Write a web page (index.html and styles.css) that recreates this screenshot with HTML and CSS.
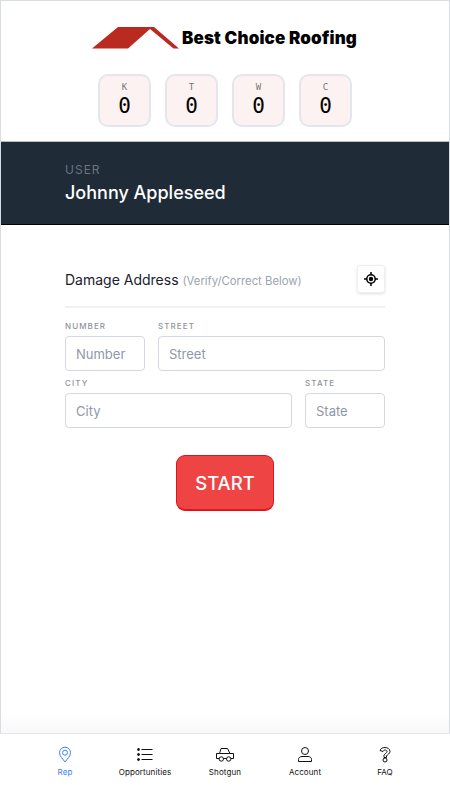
FILE: index.html
```html
<!DOCTYPE html>
<html>
<head>
  <title>Best Choice Roofing</title>
  <link rel="stylesheet" href="styles.css">
</head>
<body>
  <div class="app">
    <main class="main">
      <div class="logo">
        <svg class="logo-roof" width="87" height="22" viewBox="0 0 87 22">
          <path fill="#b92a20" d="M26 0H62L87 21.500H81.500L58 2 36 21.500H0z"/>
        </svg>
        <span class="logo-text">Best Choice Roofing</span>
      </div>
      <div class="counters">
        <div class="counter"><span class="counter-key">K</span><span class="counter-val">0</span></div>
        <div class="counter"><span class="counter-key">T</span><span class="counter-val">0</span></div>
        <div class="counter"><span class="counter-key">W</span><span class="counter-val">0</span></div>
        <div class="counter"><span class="counter-key">C</span><span class="counter-val">0</span></div>
      </div>
      <div class="user-bar">
        <div class="user-label">USER</div>
        <div class="user-name">Johnny Appleseed</div>
      </div>
      <form class="address">
        <div class="address-head">
          <div class="address-title">Damage Address <small>(Verify/Correct Below)</small></div>
          <button type="button" class="locate">
            <svg width="14" height="14" viewBox="0 0 14 14" fill="none" stroke="#000">
              <circle cx="7" cy="7" r="4.200" stroke-width="1.500"/>
              <circle cx="7" cy="7" r="2.200" fill="#000" stroke="none"/>
              <path stroke-width="1.500" d="M7 0V3M7 11V14M0 7H3M11 7H14"/>
            </svg>
          </button>
        </div>
        <div class="field-row">
          <label class="field field-small"><span>NUMBER</span><input placeholder="Number"></label>
          <label class="field field-grow"><span>STREET</span><input placeholder="Street"></label>
        </div>
        <div class="field-row">
          <label class="field field-grow"><span>CITY</span><input placeholder="City"></label>
          <label class="field field-small"><span>STATE</span><input placeholder="State"></label>
        </div>
        <button type="button" class="start">START</button>
      </form>
    </main>
    <nav class="tabs">
      <a class="tab active">
        <svg width="18" height="18" viewBox="0 0 18 18" fill="none" stroke="currentColor">
          <path d="M9 16C7 13 3.500 10.500 3.500 6.700A5.500 5.500 0 0 1 14.500 6.700C14.500 10.500 11 13 9 16Z"/>
          <circle cx="9" cy="6.700" r="2.500"/>
        </svg>
        <span>Rep</span>
      </a>
      <a class="tab">
        <svg width="18" height="18" viewBox="0 0 18 18" fill="none" stroke="currentColor">
          <path d="M5.500 3.500H16.500M5.500 8.500H16.500M5.500 13.500H16.500"/>
          <circle cx="2.500" cy="3.500" r="1" fill="currentColor"/>
          <circle cx="2.500" cy="8.500" r="1" fill="currentColor"/>
          <circle cx="2.500" cy="13.500" r="1" fill="currentColor"/>
        </svg>
        <span>Opportunities</span>
      </a>
      <a class="tab">
        <svg width="18" height="18" viewBox="0 0 18 18" fill="none" stroke="currentColor">
          <path d="M3 12.500H.5V7.500H3.500L5 2.500H11.500L14 7.500H17.500V12.500H15M7.500 12.500H10.500M3.500 7.500H14"/>
          <circle cx="5.300" cy="13" r="2.200"/>
          <circle cx="12.700" cy="13" r="2.200"/>
        </svg>
        <span>Shotgun</span>
      </a>
      <a class="tab">
        <svg width="18" height="18" viewBox="0 0 18 18" fill="none" stroke="currentColor">
          <circle cx="9" cy="5" r="3.500"/>
          <path d="M2.500 15.500V13.500C2.500 11.500 4 10.500 6 10.500H12C14 10.500 15.500 11.500 15.500 13.500V15.500Z"/>
        </svg>
        <span>Account</span>
      </a>
      <a class="tab">
        <svg width="18" height="18" viewBox="0 0 18 18" fill="none" stroke="currentColor">
          <path d="M4 4.500C4.500 2.500 6.500 1.500 9 1.500S14 3 14 5.500C14 7.500 11.500 8.500 10.500 10V11.500H8V9.500C8.500 7.500 11 7 11 5.500C11 4.500 10 4 9 4S7.500 4.500 7 5.500Z"/>
          <circle cx="9" cy="14" r="2"/>
        </svg>
        <span>FAQ</span>
      </a>
    </nav>
  </div>
</body>
</html>
```
FILE: styles.css
```css
* {
  box-sizing: border-box;
}
body {
  margin: 0;
  font-family: Inter, "Liberation Sans", sans-serif;
  background: #fff;
}
.app {
  width: 450px;
  height: 800px;
  display: flex;
  flex-direction: column;
}
.main {
  height: 733px;
  border: 1px solid #d8dce4;
  border-bottom: none;
  background: linear-gradient(to bottom, #fff 97%, #f8f8f8);
}
.logo {
  height: 73px;
  padding: 26px 0 0 91px;
  display: flex;
  align-items: flex-start;
}
.logo-roof {
  flex: none;
}
.logo-text {
  margin: 0 0 0 3px;
  font-weight: 900;
  font-size: 17px;
  line-height: 22px;
  letter-spacing: 0.15px;
  color: #000;
  white-space: nowrap;
}
.counters {
  display: flex;
  justify-content: center;
  gap: 14px;
}
.counter {
  width: 53px;
  height: 53px;
  background: #fdf2f2;
  border: 2px solid #e4e6ee;
  border-radius: 10px;
  display: flex;
  flex-direction: column;
  align-items: center;
  font-family: "DejaVu Sans Mono", monospace;
}
.counter-key {
  margin-top: 6px;
  font-size: 9px;
  line-height: 11px;
  color: #777;
}
.counter-val {
  margin-top: 2px;
  font-size: 21px;
  line-height: 23px;
  color: #000;
}
.user-bar {
  margin-top: 14px;
  height: 84px;
  padding: 21px 0 0 64px;
  background: #202b38;
  border-top: 1px solid #b8bcc2;
  border-bottom: 1px solid #000;
}
.user-label {
  font-size: 12px;
  line-height: 14px;
  letter-spacing: 1px;
  color: #6b7280;
}
.user-name {
  margin-top: 4px;
  font-size: 18px;
  line-height: 24px;
  font-weight: 500;
  color: #fff;
}
.address {
  padding: 40px 64px 0;
}
.address-head {
  display: flex;
  justify-content: space-between;
  align-items: center;
  box-sizing: content-box;
  height: 28px;
  padding-bottom: 13px;
  border-bottom: 2px solid #f0f1f3;
}
.address-title {
  font-size: 14px;
  color: #1a202c;
}
.address-title small {
  font-size: 11.300px;
  color: #9ca3af;
}
.locate {
  width: 28px;
  height: 28px;
  padding: 0;
  background: #fff;
  border: 1px solid #edf0f3;
  border-radius: 3px;
  box-shadow: 0 1px 3px rgba(0,0,0,0.12);
  display: flex;
  align-items: center;
  justify-content: center;
}
.field-row {
  display: flex;
  gap: 13px;
  margin-top: 7px;
}
.address-head + .field-row {
  margin-top: 13px;
}
.field {
  display: block;
}
.field-small {
  width: 80px;
  flex: none;
}
.field-grow {
  flex: 1;
}
.field span {
  display: block;
  height: 15px;
  font-size: 8px;
  line-height: 11px;
  font-weight: 500;
  letter-spacing: 1.100px;
  color: #8f939b;
}
.field input {
  display: block;
  width: 100%;
  height: 35px;
  padding: 0 10px;
  border: 1px solid #d5d8e0;
  border-radius: 4px;
  font-family: inherit;
  font-size: 13px;
}
.field input::placeholder {
  color: #8f97a8;
  opacity: 1;
}
.start {
  display: block;
  width: 98px;
  height: 56px;
  margin: 27px auto 0;
  background: #ef4444;
  border: 1px solid #e3131b;
  border-bottom-width: 2px;
  border-radius: 9px;
  color: #fff;
  font-family: inherit;
  font-size: 18.500px;
  font-weight: 500;
}
.tabs {
  height: 67px;
  padding: 12px 25px 0;
  border-top: 1px solid #e5e7eb;
  display: flex;
}
.tab {
  flex: 1;
  display: flex;
  flex-direction: column;
  align-items: center;
  color: #111;
}
.tab svg {
  flex: none;
}
.tab span {
  margin-top: 3px;
  font-size: 8px;
  line-height: 11px;
  font-weight: 400;
  letter-spacing: 0.1px;
  white-space: nowrap;
}
.tab.active {
  color: #3b82f6;
}
```
